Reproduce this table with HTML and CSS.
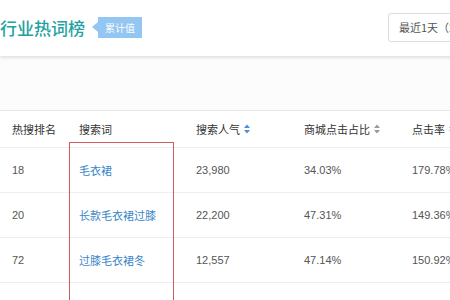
FILE: index.html
```html
<!DOCTYPE html>
<html lang="zh">
<head>
<meta charset="utf-8">
<title>行业热词榜</title>
<link rel="stylesheet" href="styles.css">
</head>
<body>
<div class="page">
  <header class="top">
    <div class="title-group">
      <h1 class="title">行业热词榜</h1>
      <span class="badge">累计值</span>
    </div>
    <div class="range">最近1天（2018-10-20）</div>
  </header>
  <div class="gap"></div>
  <section class="table">
    <div class="row head">
      <div class="cell">热搜排名</div>
      <div class="cell">搜索词</div>
      <div class="cell">搜索人气 <svg class="sort active" viewBox="0 0 6 10" width="6" height="10"><path d="M3 0.5 L6 4 H0 Z"/><path d="M0 6 H6 L3 9.5 Z"/></svg></div>
      <div class="cell">商城点击占比 <svg class="sort" viewBox="0 0 6 10" width="6" height="10"><path d="M3 0.5 L6 4 H0 Z"/><path d="M0 6 H6 L3 9.5 Z"/></svg></div>
      <div class="cell">点击率 <svg class="sort" viewBox="0 0 6 10" width="6" height="10"><path d="M3 0.5 L6 4 H0 Z"/><path d="M0 6 H6 L3 9.5 Z"/></svg></div>
    </div>
    <div class="row">
      <div class="cell">18</div>
      <div class="cell kw">毛衣裙</div>
      <div class="cell">23,980</div>
      <div class="cell">34.03%</div>
      <div class="cell">179.78%</div>
    </div>
    <div class="row">
      <div class="cell">20</div>
      <div class="cell kw">长款毛衣裙过膝</div>
      <div class="cell">22,200</div>
      <div class="cell">47.31%</div>
      <div class="cell">149.36%</div>
    </div>
    <div class="row">
      <div class="cell">72</div>
      <div class="cell kw">过膝毛衣裙冬</div>
      <div class="cell">12,557</div>
      <div class="cell">47.14%</div>
      <div class="cell">150.92%</div>
    </div>
    <div class="row faded">
      <div class="cell">4023</div>
      <div class="cell kw">毛衣裙女中长款</div>
      <div class="cell">10,864</div>
      <div class="cell">45.70%</div>
      <div class="cell">160.53%</div>
    </div>
    <div class="highlight"></div>
  </section>
</div>
</body>
</html>
```

FILE: styles.css
```css
html, body {
  margin: 0;
  padding: 0;
  overflow: hidden;
  background: #ffffff;
}

body {
  font-family: "Liberation Sans", "Noto Sans CJK SC", sans-serif;
  color: #555;
}

.page {
  width: 560px;
}

.top {
  height: 56px;
  display: flex;
  align-items: center;
  padding-right: 12px;
  background: #fff;
  box-shadow: 0 2px 3px rgba(0, 0, 0, 0.11);
  position: relative;
  z-index: 1;
}

.title-group {
  display: flex;
  align-items: center;
  gap: 13px;
  margin-top: -2px;
}

.title {
  margin: 0;
  font-family: "Noto Sans CJK SC", sans-serif;
  font-size: 17px;
  font-weight: 500;
  color: #23a2a2;
  letter-spacing: 0;
}

.badge {
  position: relative;
  background: #93c6f2;
  color: #fff;
  font-family: "Noto Sans CJK SC", sans-serif;
  font-size: 10px;
  line-height: 21px;
  height: 21px;
  padding: 0 7px;
}

.badge::before {
  content: "";
  position: absolute;
  left: -6px;
  top: 5px;
  border-top: 5.5px solid transparent;
  border-bottom: 5.5px solid transparent;
  border-right: 6px solid #93c6f2;
}

.range {
  margin-left: auto;
  width: 160px;
  box-sizing: border-box;
  height: 29px;
  line-height: 27px;
  border: 1px solid #dcdcdc;
  border-radius: 3px;
  padding-left: 10px;
  font-family: "Noto Sans CJK SC", sans-serif;
  font-size: 11px;
  color: #555;
  white-space: nowrap;
  overflow: hidden;
  margin-top: -1px;
}

.gap {
  height: 54px;
  background: #fcfcfc;
}

.table {
  position: relative;
  border-top: 1px solid #e8e8e8;
}

.row {
  display: grid;
  grid-template-columns: 67px 117px 108px 108px 1fr;
  align-items: center;
  height: 45px;
  box-sizing: border-box;
  border-bottom: 1px solid #eeeeee;
  font-size: 11px;
  color: #555;
}

.row.head {
  height: 37px;
  color: #333;
  font-family: "Noto Sans CJK SC", sans-serif;
}

.cell {
  padding-left: 12px;
  white-space: nowrap;
  display: flex;
  align-items: center;
  gap: 4px;
}

.kw {
  color: #3b87c9;
  font-family: "Noto Sans CJK SC", sans-serif;
}

.sort {
  fill: #9a9a9a;
}

.sort.active {
  fill: #4a8fdc;
}

.row.faded {
  color: #ececec;
  border-bottom: none;
}

.row.faded .kw {
  color: #e4ecf5;
}

.highlight {
  position: absolute;
  left: 69px;
  top: 31px;
  width: 105px;
  height: 220px;
  box-sizing: border-box;
  border: 1px solid #d05a5c;
  pointer-events: none;
}
```
